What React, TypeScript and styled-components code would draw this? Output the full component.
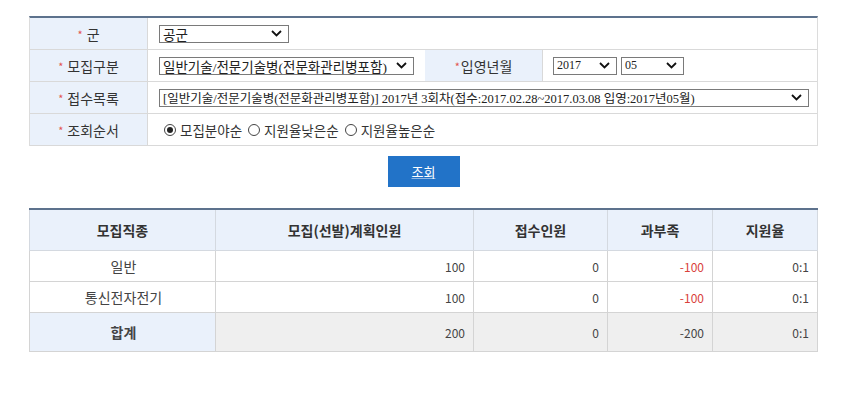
import React from 'react';
import styled, { createGlobalStyle } from 'styled-components';

// == styles =======================================================================================
const GlobalStyle = createGlobalStyle`
  html, body {
    margin: 0;
    padding: 0;
    background: #ffffff;
    font-family: 'Noto Sans CJK KR', 'Noto Sans', sans-serif;
    color: #333333;
  }
`;

const Page = styled.div`
  width: 789px;
  padding: 16px 0 0 29px;
`;

const FormGrid = styled.div`
  display: grid;
  grid-template-columns: 118px 277px 118px 1fr;
  border-top: 2px solid #5d728d;
  border-left: 1px solid #dcdcdc;
  border-right: 1px solid #dcdcdc;
`;

const Label = styled.div`
  display: flex;
  align-items: center;
  justify-content: center;
  height: 31px;
  background: #eaf1fb;
  border-bottom: 1px solid #d9d9d9;
  border-right: 1px solid #d9d9d9;
  font-size: 14px;
  color: #333333;
`;

const Star = styled.span<{ $gap?: boolean }>`
  color: #e2544e;
  font-size: 11px;
  margin-right: ${ ( p ) => ( p.$gap ? '4px' : '1px' ) };
`;

const Value = styled.div<{ $span?: number; $left?: boolean }>`
  grid-column: span ${ ( p ) => p.$span ?? 1 };
  display: flex;
  align-items: center;
  gap: 4px;
  height: 31px;
  padding-left: ${ ( p ) => ( p.$left ? '10px' : '11px' ) };
  border-bottom: 1px solid #d9d9d9;
  background: #ffffff;
`;

const Select = styled.div<{ $width: number; $size?: number }>`
  display: flex;
  align-items: center;
  justify-content: space-between;
  box-sizing: border-box;
  width: ${ ( p ) => p.$width }px;
  height: 18px;
  padding: 0 6px 0 3px;
  border: 1px solid #7a7a7a;
  background: #ffffff;
  font-family: 'Liberation Serif', 'Noto Sans CJK KR', serif;
  font-size: ${ ( p ) => p.$size ?? 12 }px;
  color: #222222;
  white-space: nowrap;
  overflow: hidden;
`;

const RadioGroup = styled.div`
  display: flex;
  align-items: center;
  gap: 6px;
  padding-left: 5px;
  font-size: 13.5px;
  color: #333333;
`;

const RadioItem = styled.label`
  display: flex;
  align-items: center;
  gap: 4px;
`;

const RadioMark = styled.span<{ $checked?: boolean }>`
  position: relative;
  box-sizing: border-box;
  width: 12px;
  height: 12px;
  border: 1px solid #444444;
  border-radius: 50%;
  background: #ffffff;

  &::after {
    content: '';
    display: ${ ( p ) => ( p.$checked ? 'block' : 'none' ) };
    position: absolute;
    left: 2px;
    top: 2px;
    width: 6px;
    height: 6px;
    border-radius: 50%;
    background: #222222;
  }
`;

const ButtonRow = styled.div`
  display: flex;
  justify-content: center;
  padding-top: 10px;
`;

const SearchButton = styled.button`
  width: 72px;
  height: 31px;
  border: none;
  background: #2273c8;
  color: #ffffff;
  font-family: 'Noto Sans CJK KR', sans-serif;
  font-size: 13px;
  text-decoration: underline;
  text-decoration-color: rgba( 255, 255, 255, 0.5 );
  cursor: pointer;
`;

const Table = styled.table`
  width: 789px;
  margin-top: 21px;
  border-collapse: collapse;
  border-top: 2px solid #5d728d;
  table-layout: fixed;
`;

const Th = styled.th`
  height: 40px;
  padding: 0;
  background: #eaf1fb;
  border: 1px solid #d4d9e0;
  border-top: none;
  font-size: 14px;
  font-weight: 700;
  color: #333333;
`;

const Td = styled.td<{ $align?: 'left' | 'right' | 'center'; $total?: boolean; $head?: boolean }>`
  height: 30px;
  padding: 0 8px 0 10px;
  border: 1px solid #d4d4d4;
  text-align: ${ ( p ) => p.$align ?? 'right' };
  background: ${ ( p ) => ( p.$head ? '#eaf1fb' : p.$total ? '#efefef' : '#ffffff' ) };
  font-size: ${ ( p ) => ( p.$align === 'center' ? '14px' : '12px' ) };
  font-weight: ${ ( p ) => ( p.$total && p.$head ? 700 : 400 ) };
  color: #444444;
`;

const Neg = styled.span<{ $red?: boolean }>`
  color: ${ ( p ) => ( p.$red ? '#d9413b' : 'inherit' ) };
`;

// == element ======================================================================================
const Chevron = () => (
  <svg width="11" height="7" viewBox="0 0 11 7">
    <path d="M1 1 L5.5 5.5 L10 1" fill="none" stroke="#111" strokeWidth="1.8" />
  </svg>
);

const rows = [
  { name: '일반', plan: 100, got: 0, diff: -100, rate: '0:1' },
  { name: '통신전자전기', plan: 100, got: 0, diff: -100, rate: '0:1' },
];

export default function App() {
  return (
    <Page>
      <GlobalStyle />
      <FormGrid>
        <Label><Star $gap>*</Star>군</Label>
        <Value $span={ 3 }>
          <Select $width={ 130 } $size={ 13.5 }>공군<Chevron /></Select>
        </Value>

        <Label><Star $gap>*</Star>모집구분</Label>
        <Value>
          <Select $width={ 255 } $size={ 13.5 }>일반기술/전문기술병(전문화관리병포함)<Chevron /></Select>
        </Value>
        <Label><Star>*</Star>입영년월</Label>
        <Value $left>
          <Select $width={ 64 }>2017<Chevron /></Select>
          <Select $width={ 63 }>05<Chevron /></Select>
        </Value>

        <Label><Star $gap>*</Star>접수목록</Label>
        <Value $span={ 3 }>
          <Select $width={ 650 } $size={ 12.5 }>
            [일반기술/전문기술병(전문화관리병포함)] 2017년 3회차(접수:2017.02.28~2017.03.08 입영:2017년05월)
            <Chevron />
          </Select>
        </Value>

        <Label><Star $gap>*</Star>조회순서</Label>
        <Value $span={ 3 }>
          <RadioGroup>
            <RadioItem><RadioMark $checked />모집분야순</RadioItem>
            <RadioItem><RadioMark />지원율낮은순</RadioItem>
            <RadioItem><RadioMark />지원율높은순</RadioItem>
          </RadioGroup>
        </Value>
      </FormGrid>

      <ButtonRow>
        <SearchButton>조회</SearchButton>
      </ButtonRow>

      <Table>
        <colgroup>
          <col style={ { width: 186 } } />
          <col style={ { width: 258 } } />
          <col style={ { width: 134 } } />
          <col style={ { width: 105 } } />
          <col />
        </colgroup>
        <thead>
          <tr>
            <Th>모집직종</Th>
            <Th>모집(선발)계획인원</Th>
            <Th>접수인원</Th>
            <Th>과부족</Th>
            <Th>지원율</Th>
          </tr>
        </thead>
        <tbody>
          { rows.map( ( r ) => (
            <tr key={ r.name }>
              <Td $align="center">{ r.name }</Td>
              <Td>{ r.plan }</Td>
              <Td>{ r.got }</Td>
              <Td><Neg $red={ r.diff < 0 }>{ r.diff }</Neg></Td>
              <Td>{ r.rate }</Td>
            </tr>
          ) ) }
          <tr>
            <Td $align="center" $head $total style={ { height: 38 } }>합계</Td>
            <Td $total>200</Td>
            <Td $total>0</Td>
            <Td $total>-200</Td>
            <Td $total>0:1</Td>
          </tr>
        </tbody>
      </Table>
    </Page>
  );
}
